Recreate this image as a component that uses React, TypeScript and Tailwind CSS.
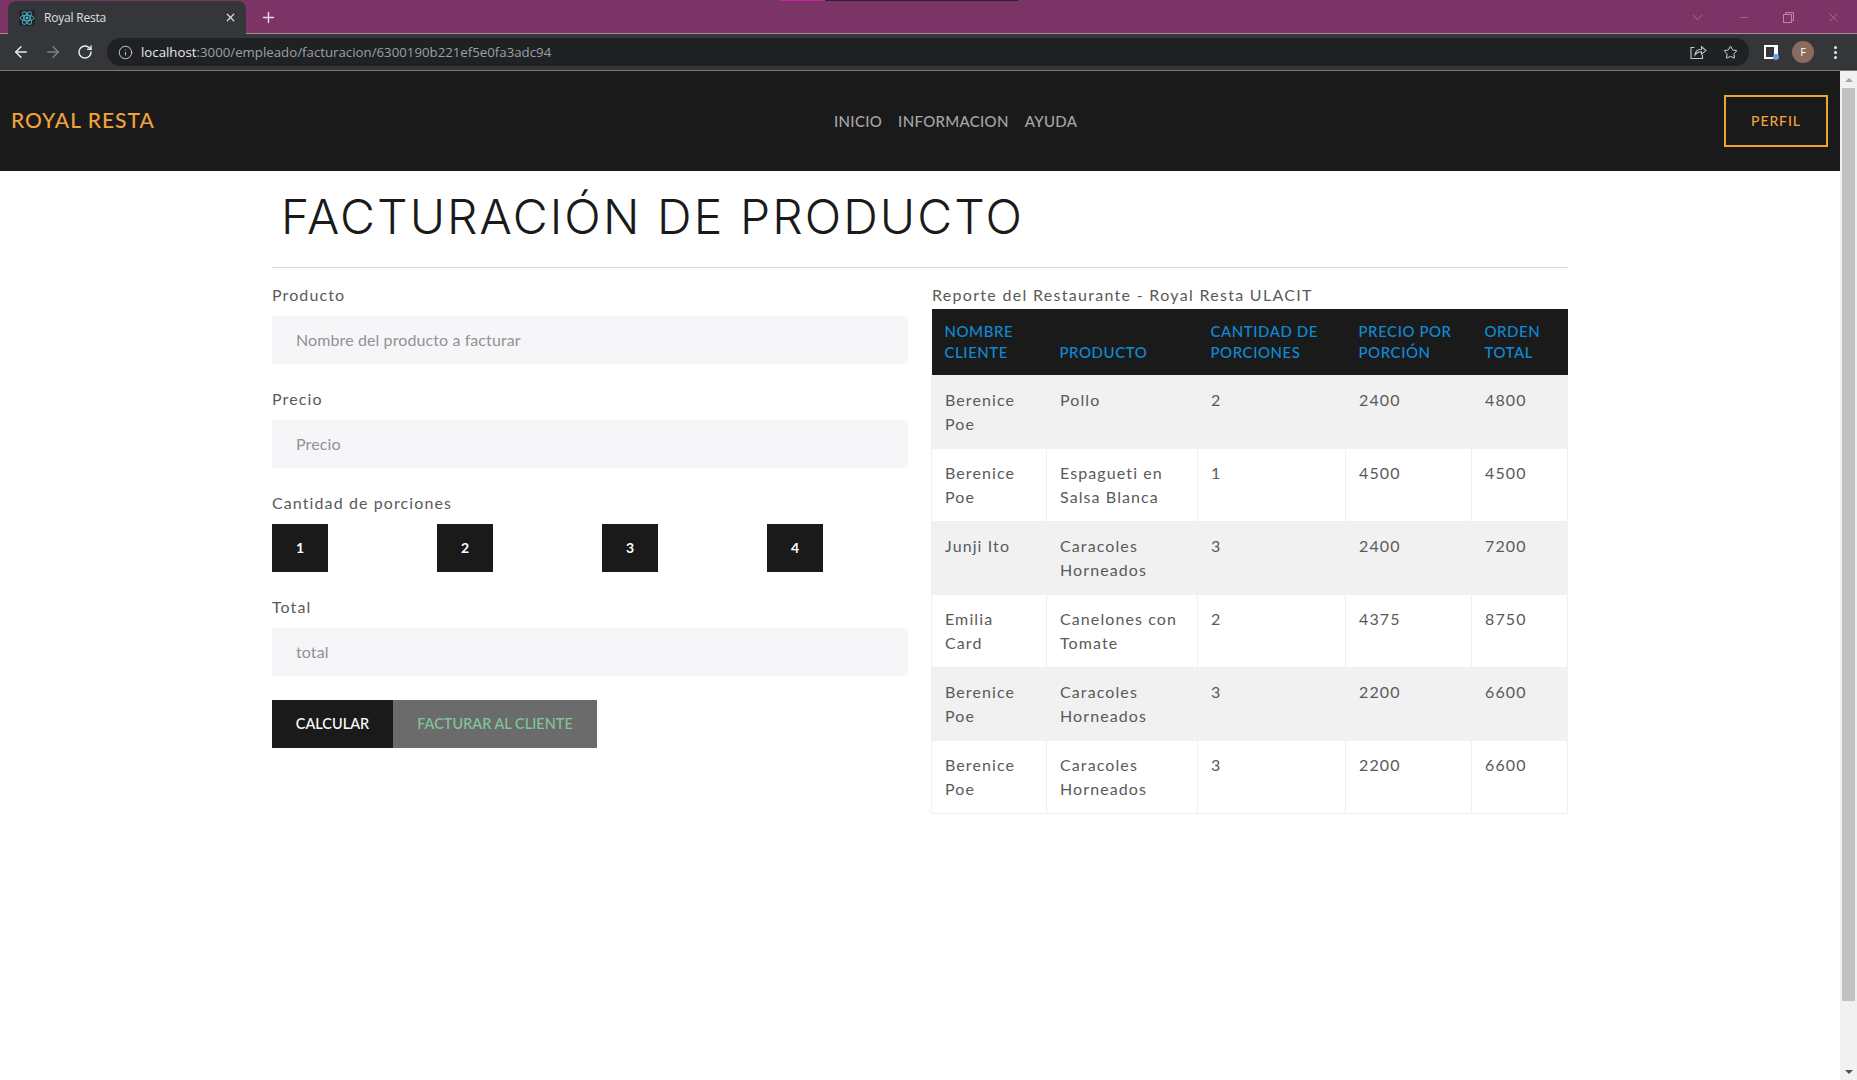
import { ArrowLeft, ArrowRight, RotateCw, Info, Star, X, Plus, ChevronDown, Minus } from "lucide-react";

const rows = [
  ["Berenice Poe", "Pollo", "2", "2400", "4800"],
  ["Berenice Poe", "Espagueti en Salsa Blanca", "1", "4500", "4500"],
  ["Junji Ito", "Caracoles Horneados", "3", "2400", "7200"],
  ["Emilia Card", "Canelones con Tomate", "2", "4375", "8750"],
  ["Berenice Poe", "Caracoles Horneados", "3", "2200", "6600"],
  ["Berenice Poe", "Caracoles Horneados", "3", "2200", "6600"],
];

function Atom() {
  return (
    <svg width="16" height="16" viewBox="0 0 16 16" fill="none" stroke="#4fb3c8" strokeWidth="0.9">
      <rect width="16" height="16" rx="2" fill="#22262b" stroke="none" />
      <ellipse cx="8" cy="8" rx="7" ry="2.8" />
      <ellipse cx="8" cy="8" rx="7" ry="2.8" transform="rotate(60 8 8)" />
      <ellipse cx="8" cy="8" rx="7" ry="2.8" transform="rotate(120 8 8)" />
      <circle cx="8" cy="8" r="1.4" fill="#4fb3c8" stroke="none" />
    </svg>
  );
}

function Share() {
  return (
    <svg width="17" height="15" viewBox="0 0 17 15" fill="none" stroke="#c4c7c5" strokeWidth="1.1">
      <path d="M4.5 2.5H1v11h11.5V10" />
      <path d="M5 10c.4-3.6 3.2-5.7 6.5-5.7V1.8L16 5.6l-4.5 3.6V6.8C9 6.7 6.6 7.8 5 10z" />
    </svg>
  );
}

function Restore() {
  return (
    <svg width="11" height="11" viewBox="0 0 11 11" fill="none" stroke="#b98aa8" strokeWidth="1">
      <rect x="0.5" y="2.5" width="8" height="8" />
      <path d="M2.5 2.5V.5h8v8H8.5" />
    </svg>
  );
}

function Field({ label, placeholder }: { label: string; placeholder: string }) {
  return (
    <div className="flex flex-col">
      <label className="h-[24px] leading-[24px] mt-[-1px] mb-[9px] text-[16px] tracking-[1.1px] text-[#5a5a5a]">{label}</label>
      <div className="h-[48px] bg-[#f6f6f8] pl-6 pb-[1px] flex items-center text-[16px] tracking-[0.1px] text-[#8f9296]">{placeholder}</div>
    </div>
  );
}

export default function App() {
  return (
    <div className="w-[1857px] h-[1080px] overflow-hidden flex flex-col bg-white font-['Lato','Liberation_Sans',sans-serif]">
      {/* Browser tab strip */}
      <div className="h-[34px] bg-[#7c3366] border-b border-[#a78a9d] flex flex-col shrink-0">
        <div className="h-px flex shrink-0 pl-[780px]">
          <div className="w-[45px] bg-[#d01fa0]" />
          <div className="w-[193px] bg-[#26262a]" />
        </div>
        <div className="flex-1 flex items-center pl-2 pr-[16px] font-['Open_Sans',sans-serif]">
          <div className="w-[238px] h-[33px] mb-[-1px] bg-[#35363a] rounded-t-lg flex items-center pl-[11px] pr-[9px] text-[12px] text-[#dee1e6]">
            <Atom />
            <span className="ml-[9px] flex-1 tracking-[-0.2px]">Royal Resta</span>
            <X size={13} strokeWidth={2.2} className="text-[#dee1e6]" />
          </div>
          <Plus size={17} strokeWidth={2} className="ml-[14px] text-[#eadde6]" />
          <div className="flex-1" />
          <ChevronDown size={17} strokeWidth={1} className="text-[#b98aa8]" />
          <Minus size={13} strokeWidth={1} className="ml-[31px] text-[#b98aa8]" />
          <div className="ml-[33px]"><Restore /></div>
          <X size={15} strokeWidth={1} className="ml-[32px] text-[#b98aa8]" />
        </div>
      </div>

      {/* Browser toolbar */}
      <div className="h-[37px] bg-[#35363a] border-b border-[#77787b] flex items-center pl-[12px] shrink-0 font-['Open_Sans',sans-serif]">
        <ArrowLeft size={18} strokeWidth={2} className="text-[#e8eaed]" />
        <ArrowRight size={18} strokeWidth={2} className="ml-[14px] text-[#7e8084]" />
        <RotateCw size={16} strokeWidth={2.2} className="ml-[15px] text-[#e8eaed]" />
        <div className="ml-[14px] w-[1642px] h-[28px] rounded-full bg-[#202124] flex items-center pl-[11px] pr-[11px]">
          <Info size={15} strokeWidth={1.6} className="text-[#c4c7c5]" />
          <div className="ml-[8px] flex-1 pt-[1px] text-[13.25px] text-[#9aa0a6]">
            <span className="text-[#e8eaed]">localhost</span>:3000/empleado/facturacion/6300190b221ef5e0fa3adc94
          </div>
          <div className="mr-[-1px]"><Share /></div>
          <Star size={15} strokeWidth={1.6} className="ml-[17px] text-[#d5d7d9]" />
        </div>
        <div className="ml-[15px] w-[14px] h-[14px] bg-white relative pl-[2px] pt-[2px]">
          <div className="w-[8px] h-[10px] bg-[#35363a]" />
          <div className="absolute right-[-1px] bottom-[-1px] w-[6px] h-[6px] rounded-full bg-[#6d9eeb]" />
        </div>
        <div className="ml-[14px] w-[22px] h-[22px] rounded-full bg-[#8b6b5e] text-white text-[11px] flex items-center justify-center">F</div>
        <div className="ml-[20px] flex flex-col gap-[2px]">
          <div className="w-[3px] h-[3px] rounded-full bg-[#e8eaed]" />
          <div className="w-[3px] h-[3px] rounded-full bg-[#e8eaed]" />
          <div className="w-[3px] h-[3px] rounded-full bg-[#e8eaed]" />
        </div>
      </div>

      <div className="flex-1 flex min-h-0">
        <div className="w-[1840px] flex flex-col">
          {/* Navbar */}
          <nav className="h-[100px] bg-[#1a1a1a] flex items-center shrink-0 pl-[11px] pr-[12px]">
            <div className="w-[823px] pb-[2px] text-[21px] font-medium tracking-[1px] text-[#f0a33b]">ROYAL RESTA</div>
            <div className="flex gap-4 text-[15px] font-medium tracking-[0.3px] text-[#a6a6a6]">
              <span>INICIO</span>
              <span>INFORMACION</span>
              <span>AYUDA</span>
            </div>
            <div className="flex-1" />
            <div className="w-[104px] h-[52px] pb-[2px] border-2 border-[#f0a33b] flex items-center justify-center text-[14px] font-medium tracking-[0.9px] text-[#f0a33b]">PERFIL</div>
          </nav>

          {/* Content */}
          <main className="w-[1296px] ml-[272px] flex flex-col">
            <h1 className="pl-[9px] h-[97px] leading-[92px] text-[48px] font-light tracking-[2.1px] text-[#1a1a1a] font-['Inter',sans-serif] border-b border-[#d9d9d9]">
              FACTURACIÓN DE PRODUCTO
            </h1>
            <div className="mt-[16px] flex gap-[24px]">
              <div className="w-[636px] flex flex-col gap-[24px]">
                <Field label="Producto" placeholder="Nombre del producto a facturar" />
                <Field label="Precio" placeholder="Precio" />
                <div className="flex flex-col">
                  <label className="h-[24px] leading-[24px] mt-[-1px] mb-[9px] text-[16px] tracking-[1.1px] text-[#5a5a5a]">Cantidad de porciones</label>
                  <div className="grid grid-cols-4 w-[660px]">
                    {["1", "2", "3", "4"].map((n) => (
                      <div key={n} className="w-[56px] h-[48px] pb-[1px] bg-[#1a1a1a] text-white text-[14px] font-bold flex items-center justify-center">{n}</div>
                    ))}
                  </div>
                </div>
                <Field label="Total" placeholder="total" />
                <div className="flex text-[14.5px]">
                  <div className="w-[121px] h-[48px] pb-[1px] bg-[#1a1a1a] text-white font-medium flex items-center justify-center">CALCULAR</div>
                  <div className="w-[204px] h-[48px] pb-[1px] bg-[#6b6b6b] text-[#7fc796] font-medium flex items-center justify-center">FACTURAR AL CLIENTE</div>
                </div>
              </div>
              <div className="w-[636px] flex flex-col">
                <div className="h-[24px] leading-[24px] mt-[-1px] mb-[2px] text-[16px] tracking-[1.3px] text-[#5a5a5a]">Reporte del Restaurante - Royal Resta ULACIT</div>
                <table className="w-[636px] ml-[-1px] table-fixed border-collapse text-[16px] tracking-[1.1px] text-[#5a5a5a]">
                  <colgroup>
                    <col className="w-[115px]" />
                    <col className="w-[151px]" />
                    <col className="w-[148px]" />
                    <col className="w-[126px]" />
                    <col className="w-[96px]" />
                  </colgroup>
                  <thead>
                    <tr className="h-[66px] bg-[#1a1a1a] text-[15px] leading-[21px] text-[#0f8bd6] text-left align-bottom">
                      <th className="font-medium tracking-[0.55px] pl-[13px] pr-2 pb-[12px]">NOMBRE CLIENTE</th>
                      <th className="font-medium tracking-[0.55px] pl-[13px] pr-2 pb-[12px]">PRODUCTO</th>
                      <th className="font-medium tracking-[0.55px] pl-[13px] pr-2 pb-[12px]">CANTIDAD DE PORCIONES</th>
                      <th className="font-medium tracking-[0.55px] pl-[13px] pr-2 pb-[12px]">PRECIO POR PORCIÓN</th>
                      <th className="font-medium tracking-[0.55px] pl-[13px] pr-2 pb-[12px]">ORDEN TOTAL</th>
                    </tr>
                  </thead>
                  <tbody>
                    {rows.map((r, i) => (
                      <tr key={i} className={i % 2 === 0 ? "bg-[#f1f1f1]" : "bg-white"}>
                        {r.map((c, j) => (
                          <td key={j} className={`h-[73px] pl-[13px] ${j === 0 ? "pr-6" : "pr-3"} pt-[12px] pb-[12px] leading-[24px] align-top border ${i % 2 === 0 ? "border-[#f1f1f1]" : "border-[#f0f0f0]"}`}>{c}</td>
                        ))}
                      </tr>
                    ))}
                  </tbody>
                </table>
              </div>
            </div>
          </main>
        </div>

        {/* Page scrollbar */}
        <div className="w-[17px] bg-[#f1f1f1] flex flex-col items-center">
          <div className="h-[17px] flex items-center justify-center">
            <div className="w-0 h-0 border-x-[4px] border-x-transparent border-b-[4px] border-b-[#a3a3a3]" />
          </div>
          <div className="w-[13px] h-[913px] bg-[#c1c1c1]" />
          <div className="flex-1" />
          <div className="h-[17px] flex items-center justify-center">
            <div className="w-0 h-0 border-x-[4px] border-x-transparent border-t-[4px] border-t-[#505050]" />
          </div>
        </div>
      </div>
    </div>
  );
}
